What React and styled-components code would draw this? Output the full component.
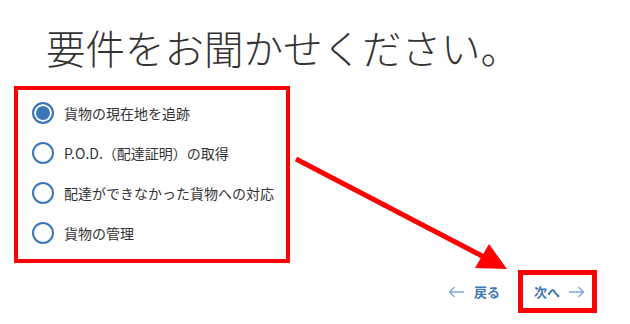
import React, { useState } from 'react'
import styled, { createGlobalStyle } from 'styled-components'

const GlobalStyle = createGlobalStyle`
  html, body {
    margin: 0;
    padding: 0;
    background: #fff;
  }
  body {
    font-family: "Noto Sans CJK JP", "Noto Sans", sans-serif;
  }
`

const options = [
  '貨物の現在地を追跡',
  'P.O.D.（配達証明）の取得',
  '配達ができなかった貨物への対応',
  '貨物の管理',
]

const App = () => {
  const [selected, setSelected] = useState(0)

  return (
    <Page>
      <GlobalStyle />
      <Title>要件をお聞かせください。</Title>
      <Group>
        {options.map((label, i) => (
          <Option key={i} onClick={() => setSelected(i)}>
            <Radio checked={selected === i} />
            <Label>{label}</Label>
          </Option>
        ))}
      </Group>
      <Footer>
        <NavButton>
          <ArrowIcon dir="left" />
          <span>戻る</span>
        </NavButton>
        <NextButton>
          <span>次へ</span>
          <ArrowIcon dir="right" />
        </NextButton>
      </Footer>
      <Pointer viewBox="0 0 630 324" width="630" height="324">
        <line x1="296" y1="159" x2="484" y2="257" stroke="#ff0000" strokeWidth="5" />
        <polygon points="489,244 475,268 507,269" fill="#ff0000" />
      </Pointer>
    </Page>
  )
}

const ArrowIcon = ({ dir }) => (
  <ArrowSvg width="17" height="12" viewBox="0 0 17 12">
    {dir === 'left' ? (
      <path d="M16 6H1.5M6.5 1L1.5 6l5 5" />
    ) : (
      <path d="M1 6h14.5M10.5 1l5 5-5 5" />
    )}
  </ArrowSvg>
)

export default App

const Page = styled.div`
  position: relative;
  width: 630px;
  height: 324px;
  overflow: hidden;
`

const Title = styled.h1`
  margin: 0;
  padding: 25px 0 0 46px;
  font-size: 39.5px;
  line-height: 44px;
  font-weight: 300;
  color: #333;
  height: 62px;
  box-sizing: border-box;
`

const Group = styled.div`
  margin: 24px 0 0 14px;
  width: 276px;
  box-sizing: border-box;
  border: 4px solid #ff0000;
  padding: 3px 0 6px 14px;
  display: flex;
  flex-direction: column;
`

const Option = styled.div`
  display: flex;
  align-items: center;
  height: 40px;
  gap: 10px;
  cursor: pointer;
`

const Radio = styled.span`
  width: 22px;
  height: 22px;
  box-sizing: border-box;
  border-radius: 50%;
  border: 2px solid #3b76b6;
  background: ${p => (p.checked ? '#3b76b6' : '#fff')};
  box-shadow: ${p => (p.checked ? 'inset 0 0 0 2px #fff' : 'none')};
  flex-shrink: 0;
`

const Label = styled.span`
  font-size: 14px;
  color: #333;
`

const Footer = styled.div`
  display: flex;
  justify-content: flex-end;
  align-items: center;
  gap: 18px;
  padding-right: 33px;
  margin-top: 7px;
`

const NavButton = styled.button`
  display: flex;
  align-items: center;
  gap: 9px;
  background: none;
  border: none;
  padding: 0;
  font-family: inherit;
  font-size: 13px;
  font-weight: 700;
  color: #3f78b5;
  cursor: pointer;
`

const NextButton = styled(NavButton)`
  border: 5px solid #ff0000;
  height: 43px;
  box-sizing: border-box;
  padding: 0 7px 0 11px;
  gap: 8px;
`

const ArrowSvg = styled.svg`
  fill: none;
  stroke: #86a9d4;
  stroke-width: 1.5;
`

const Pointer = styled.svg`
  position: absolute;
  left: 0;
  top: 0;
  pointer-events: none;
`
